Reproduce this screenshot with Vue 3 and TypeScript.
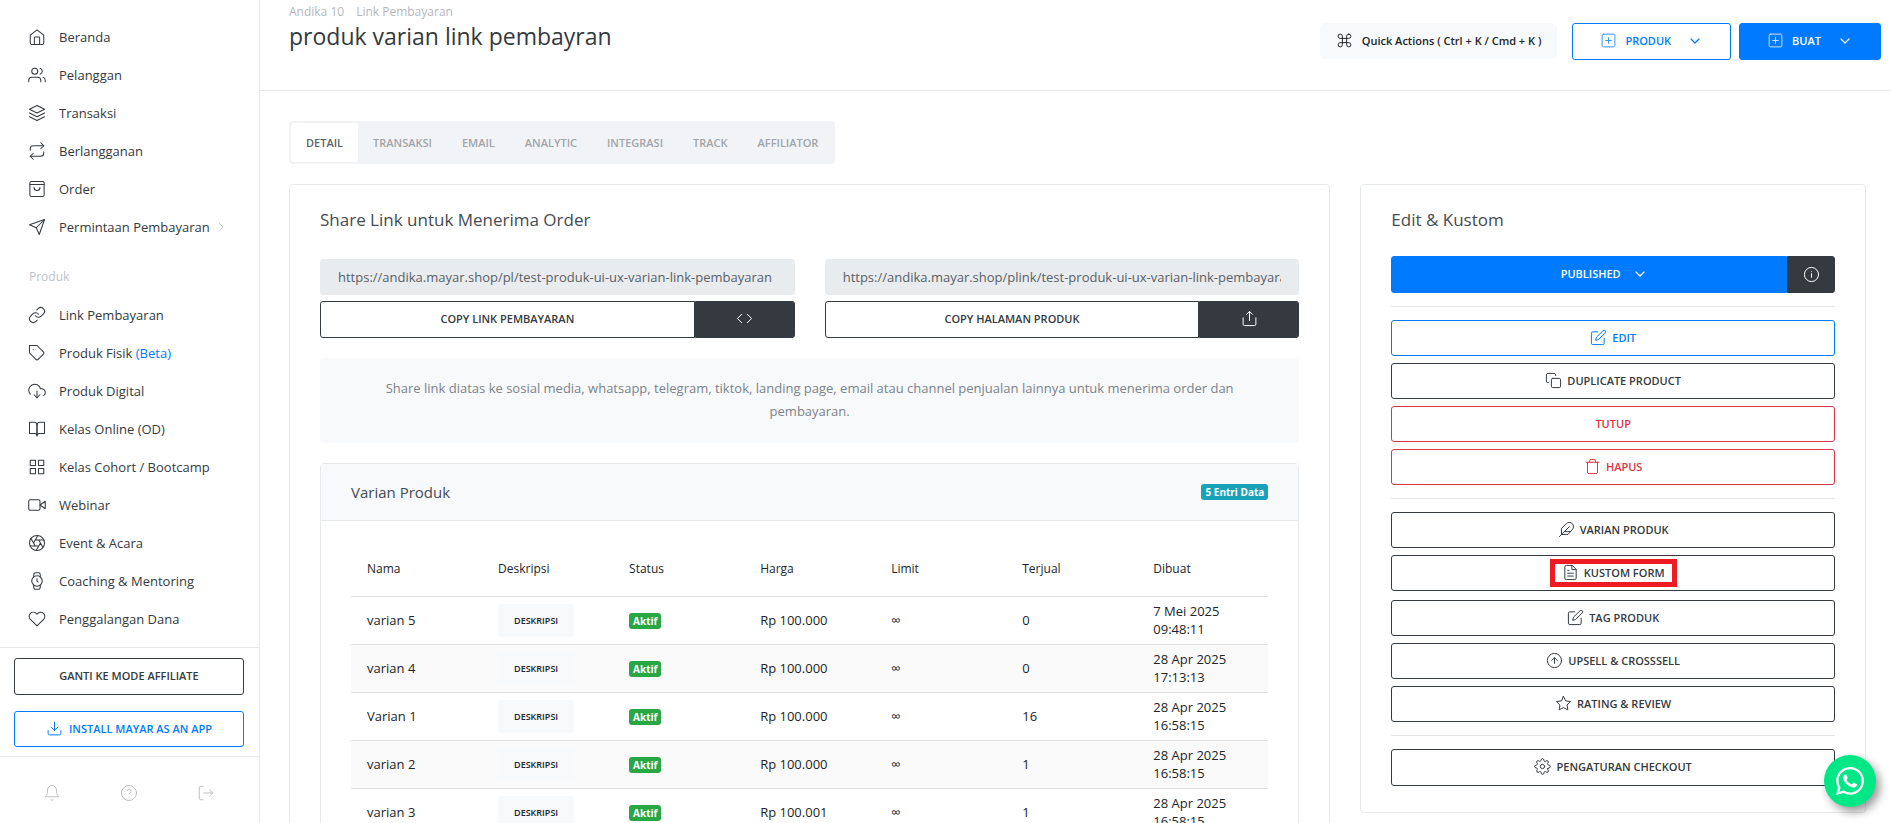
<script setup lang="ts">
import { h } from 'vue'

interface NavItem {
  label: string
  icon: string
  note?: string
  expandable?: boolean
}

interface Action {
  label: string
  icon?: string
  tone: 'blue' | 'dark' | 'red'
  marked?: boolean
}

interface Variant {
  name: string
  price: string
  sold: number
  created: string
}

const shapes: Record<string, string> = {
  home: '<path d="M3 9.5l9-7 9 7V20a2 2 0 0 1-2 2H5a2 2 0 0 1-2-2z"/><path d="M8.500 22v-9a1 1 0 0 1 1-1h5a1 1 0 0 1 1 1v9"/>',
  users: '<path d="M17 21v-2a4 4 0 0 0-4-4H5a4 4 0 0 0-4 4v2"/><circle cx="9" cy="7" r="4"/><path d="M23 21v-2a4 4 0 0 0-3-3.870"/><path d="M16 3.130a4 4 0 0 1 0 7.750"/>',
  layers: '<path d="M12 2L2 7l10 5 10-5z"/><path d="M2 17l10 5 10-5"/><path d="M2 12l10 5 10-5"/>',
  repeat: '<path d="M17 1l4 4-4 4"/><path d="M3 11V9a4 4 0 0 1 4-4h14"/><path d="M7 23l-4-4 4-4"/><path d="M21 13v2a4 4 0 0 1-4 4H3"/>',
  bag: '<rect x="2.500" y="2" width="19" height="20" rx="2"/><path d="M2.500 6h19"/><path d="M16 10a4 4 0 0 1-8 0"/>',
  send: '<path d="M22 2L11 13"/><path d="M22 2l-7 20-4-9-9-4z"/>',
  link: '<path d="M10 13a5 5 0 0 0 7.540.540l3-3a5 5 0 0 0-7.070-7.070l-1.720 1.710"/><path d="M14 11a5 5 0 0 0-7.540-.540l-3 3a5 5 0 0 0 7.070 7.070l1.710-1.710"/>',
  tag: '<path d="M20.590 13.410l-7.170 7.170a2 2 0 0 1-2.830 0L2 12V2h10l8.590 8.590a2 2 0 0 1 0 2.820z"/><path d="M7 7h.010"/>',
  cloud: '<path d="M8 17l4 4 4-4"/><path d="M12 12v9"/><path d="M20.880 18.090A5 5 0 0 0 18 9h-1.260A8 8 0 1 0 3 16.290"/>',
  book: '<path d="M2 3h6a4 4 0 0 1 4 4v14a3 3 0 0 0-3-3H2z"/><path d="M22 3h-6a4 4 0 0 0-4 4v14a3 3 0 0 1 3-3h7z"/>',
  grid: '<path d="M3 3h7v7H3zM14 3h7v7h-7zM14 14h7v7h-7zM3 14h7v7H3z"/>',
  video: '<path d="M23 7l-7 5 7 5z"/><rect x="1" y="5" width="15" height="14" rx="2"/>',
  aperture: '<circle cx="12" cy="12" r="10"/><path d="M14.310 8l5.740 9.940M9.690 8h11.480M7.380 12l5.740-9.940M9.690 16L3.950 6.060M14.310 16H2.830M16.620 12l-5.740 9.940"/>',
  watch: '<circle cx="12" cy="12" r="7"/><path d="M12 9v3l1.500 1.500"/><path d="M16.510 17.350l-.350 3.830a2 2 0 0 1-2 1.820H9.830a2 2 0 0 1-2-1.820l-.350-3.830m.010-10.700l.350-3.830A2 2 0 0 1 9.830 1h4.350a2 2 0 0 1 2 1.820l.350 3.830"/>',
  heart: '<path d="M20.840 4.610a5.500 5.500 0 0 0-7.780 0L12 5.670l-1.060-1.060a5.500 5.500 0 0 0-7.780 7.780L12 21.230l8.840-8.840a5.500 5.500 0 0 0 0-7.780z"/>',
  right: '<path d="M8 20l8-8-8-8"/>',
  down: '<path d="M6 9l6 6 6-6"/>',
  download: '<path d="M21 15v4a2 2 0 0 1-2 2H5a2 2 0 0 1-2-2v-4"/><path d="M7 10l5 5 5-5"/><path d="M12 15V3"/>',
  bell: '<path d="M18 8A6 6 0 0 0 6 8c0 7-3 9-3 9h18s-3-2-3-9"/><path d="M13.730 21a2 2 0 0 1-3.460 0"/>',
  help: '<circle cx="12" cy="12" r="10"/><path d="M9.090 9a3 3 0 0 1 5.830 1c0 2-3 3-3 3"/><path d="M12 17h.010"/>',
  logout: '<path d="M8 21H5a2 2 0 0 1-2-2V5a2 2 0 0 1 2-2h3"/><path d="M17 16l4-4-4-4"/><path d="M21 12H9"/>',
  command: '<path d="M18 3a3 3 0 0 0-3 3v12a3 3 0 1 0 3-3H6a3 3 0 1 0 3 3V6a3 3 0 1 0-3 3h12a3 3 0 0 0 0-6z"/>',
  plus: '<rect x="3" y="3" width="18" height="18" rx="2"/><path d="M12 8v8M8 12h8"/>',
  code: '<path d="M16 18l6-6-6-6"/><path d="M8 6l-6 6 6 6"/>',
  share: '<path d="M3 11v9a2 2 0 0 0 2 2h14a2 2 0 0 0 2-2v-9"/><path d="M16 6l-4-4-4 4"/><path d="M12 2v13"/>',
  info: '<circle cx="12" cy="12" r="10"/><path d="M12 16v-5M12 8h.010"/>',
  edit: '<path d="M11 4H4a2 2 0 0 0-2 2v14a2 2 0 0 0 2 2h14a2 2 0 0 0 2-2v-7"/><path d="M18.500 2.500a2.120 2.120 0 0 1 3 3L12 15l-4 1 1-4z"/>',
  copy: '<rect x="9" y="9" width="13" height="13" rx="2"/><path d="M5 15H4a2 2 0 0 1-2-2V4a2 2 0 0 1 2-2h9a2 2 0 0 1 2 2v1"/>',
  trash: '<path d="M3 6h18"/><path d="M19 6v14a2 2 0 0 1-2 2H7a2 2 0 0 1-2-2V6m3 0V4a2 2 0 0 1 2-2h4a2 2 0 0 1 2 2v2"/>',
  feather: '<path d="M20.240 12.240a6 6 0 0 0-8.490-8.490L5 10.500V19h8.500z"/><path d="M16 8L2 22"/><path d="M17.500 15H9"/>',
  file: '<path d="M14 2H6a2 2 0 0 0-2 2v16a2 2 0 0 0 2 2h12a2 2 0 0 0 2-2V8z"/><path d="M14 2v6h6M16 13H8M16 17H8M10 9H8"/>',
  up: '<circle cx="12" cy="12" r="10"/><path d="M16 12l-4-4-4 4"/><path d="M12 16V8"/>',
  star: '<path d="M12 2l3.090 6.260L22 9.270l-5 4.870 1.180 6.880L12 17.770l-6.180 3.250L7 14.140 2 9.270l6.910-1.010z"/>',
  gear: '<circle cx="12" cy="12" r="3"/><path d="M19.400 15a1.650 1.650 0 0 0 .33 1.820l.06.06a2 2 0 1 1-2.830 2.830l-.06-.06a1.650 1.650 0 0 0-2.800 1.170V21a2 2 0 1 1-4 0v-.09A1.650 1.650 0 0 0 7.200 19.650l-.06.06a2 2 0 1 1-2.830-2.830l.06-.06A1.650 1.650 0 0 0 3.200 14H3a2 2 0 1 1 0-4h.09A1.650 1.650 0 0 0 4.370 7.200l-.06-.06a2 2 0 1 1 2.830-2.830l.06.06A1.650 1.650 0 0 0 10 3.200V3a2 2 0 1 1 4 0v.09a1.650 1.650 0 0 0 2.820 1.280l.06-.06a2 2 0 1 1 2.830 2.830l-.06.06A1.650 1.650 0 0 0 20.820 10H21a2 2 0 1 1 0 4h-.09a1.650 1.650 0 0 0-1.510 1z"/>',
}

const Icon = (props: { name: string }) =>
  h('svg', { class: 'icon', viewBox: '0 0 24 24', 'aria-hidden': 'true', innerHTML: shapes[props.name] })
Icon.props = ['name']

const mainNav: NavItem[] = [
  { label: 'Beranda', icon: 'home' },
  { label: 'Pelanggan', icon: 'users' },
  { label: 'Transaksi', icon: 'layers' },
  { label: 'Berlangganan', icon: 'repeat' },
  { label: 'Order', icon: 'bag' },
  { label: 'Permintaan Pembayaran', icon: 'send', expandable: true },
]

const productNav: NavItem[] = [
  { label: 'Link Pembayaran', icon: 'link' },
  { label: 'Produk Fisik', icon: 'tag', note: '(Beta)' },
  { label: 'Produk Digital', icon: 'cloud' },
  { label: 'Kelas Online (OD)', icon: 'book' },
  { label: 'Kelas Cohort / Bootcamp', icon: 'grid' },
  { label: 'Webinar', icon: 'video' },
  { label: 'Event & Acara', icon: 'aperture' },
  { label: 'Coaching & Mentoring', icon: 'watch' },
  { label: 'Penggalangan Dana', icon: 'heart' },
]

const tabs = ['Detail', 'Transaksi', 'Email', 'Analytic', 'Integrasi', 'Track', 'Affiliator']

const links = [
  { label: 'Copy Link Pembayaran', url: 'https://andika.mayar.shop/pl/test-produk-ui-ux-varian-link-pembayaran', icon: 'code', side: 'Embed' },
  { label: 'Copy Halaman Produk', url: 'https://andika.mayar.shop/plink/test-produk-ui-ux-varian-link-pembayaran', icon: 'share', side: 'Bagikan' },
]

const columns = ['Nama', 'Deskripsi', 'Status', 'Harga', 'Limit', 'Terjual', 'Dibuat']

const variants: Variant[] = [
  { name: 'varian 5', price: 'Rp 100.000', sold: 0, created: '7 Mei 2025 09:48:11' },
  { name: 'varian 4', price: 'Rp 100.000', sold: 0, created: '28 Apr 2025 17:13:13' },
  { name: 'Varian 1', price: 'Rp 100.000', sold: 16, created: '28 Apr 2025 16:58:15' },
  { name: 'varian 2', price: 'Rp 100.000', sold: 1, created: '28 Apr 2025 16:58:15' },
  { name: 'varian 3', price: 'Rp 100.001', sold: 1, created: '28 Apr 2025 16:58:15' },
]

const actionGroups: Action[][] = [
  [
    { label: 'Edit', icon: 'edit', tone: 'blue' },
    { label: 'Duplicate Product', icon: 'copy', tone: 'dark' },
    { label: 'Tutup', tone: 'red' },
    { label: 'Hapus', icon: 'trash', tone: 'red' },
  ],
  [
    { label: 'Varian Produk', icon: 'feather', tone: 'dark' },
    { label: 'Kustom Form', icon: 'file', tone: 'dark', marked: true },
    { label: 'Tag Produk', icon: 'edit', tone: 'dark' },
    { label: 'Upsell & Crosssell', icon: 'up', tone: 'dark' },
    { label: 'Rating & Review', icon: 'star', tone: 'dark' },
  ],
  [{ label: 'Pengaturan Checkout', icon: 'gear', tone: 'dark' }],
]
</script>

<template>
  <div class="app">
    <aside class="sidebar">
      <nav class="nav">
        <a v-for="item in mainNav" :key="item.label" href="#" class="nav-item">
          <Icon :name="item.icon" />
          <span>{{ item.label }}</span>
          <Icon v-if="item.expandable" name="right" class="nav-arrow" />
        </a>
        <h2 class="nav-label">Produk</h2>
        <a v-for="item in productNav" :key="item.label" href="#" class="nav-item">
          <Icon :name="item.icon" />
          <span>{{ item.label }} <span v-if="item.note" class="note">{{ item.note }}</span></span>
        </a>
      </nav>
      <div class="side-actions">
        <button type="button" class="btn dark">Ganti ke mode affiliate</button>
        <button type="button" class="btn blue"><Icon name="download" />Install Mayar as an app</button>
      </div>
      <div class="side-foot">
        <button type="button" aria-label="Notifikasi"><Icon name="bell" /></button>
        <button type="button" aria-label="Bantuan"><Icon name="help" /></button>
        <button type="button" aria-label="Keluar"><Icon name="logout" /></button>
      </div>
    </aside>

    <main class="main">
      <header class="header">
        <div>
          <div class="crumbs"><a href="#">Andika 10</a><a href="#">Link Pembayaran</a></div>
          <h1>produk varian link pembayran</h1>
        </div>
        <div class="header-actions">
          <button type="button" class="btn quick"><Icon name="command" />Quick Actions ( Ctrl + K / Cmd + K )</button>
          <button type="button" class="btn blue menu"><Icon name="plus" class="soft" />Produk<Icon name="down" class="caret" /></button>
          <button type="button" class="btn blue solid menu"><Icon name="plus" class="soft" />Buat<Icon name="down" class="caret" /></button>
        </div>
      </header>

      <div class="content">
        <div class="tabs" role="tablist">
          <button v-for="(tab, i) in tabs" :key="tab" type="button" role="tab" class="tab" :class="{ active: i === 0 }" :aria-selected="i === 0">
            {{ tab }}
          </button>
        </div>

        <div class="row">
          <div class="col">
            <section class="card">
              <h2 class="card-title">Share Link untuk Menerima Order</h2>
              <div class="links">
                <div v-for="link in links" :key="link.label" class="link-box">
                  <input type="text" class="url" readonly :value="link.url" :aria-label="link.label" />
                  <div class="split">
                    <button type="button" class="btn dark">{{ link.label }}</button>
                    <button type="button" class="btn dark solid side" :aria-label="link.side"><Icon :name="link.icon" /></button>
                  </div>
                </div>
              </div>
              <p class="hint">
                Share link diatas ke sosial media, whatsapp, telegram, tiktok, landing page, email atau channel penjualan lainnya
                untuk menerima order dan pembayaran.
              </p>

              <section class="variants">
                <header class="variants-head">
                  <h3>Varian Produk</h3>
                  <span class="badge info">5 Entri Data</span>
                </header>
                <table>
                  <thead>
                    <tr>
                      <th v-for="column in columns" :key="column" scope="col">{{ column }}</th>
                    </tr>
                  </thead>
                  <tbody>
                    <tr v-for="variant in variants" :key="variant.name">
                      <td>{{ variant.name }}</td>
                      <td><button type="button" class="mini">Deskripsi</button></td>
                      <td><span class="badge ok">Aktif</span></td>
                      <td>{{ variant.price }}</td>
                      <td>∞</td>
                      <td>{{ variant.sold }}</td>
                      <td>{{ variant.created }}</td>
                    </tr>
                  </tbody>
                </table>
              </section>
            </section>
          </div>

          <div class="col">
            <section class="card actions">
              <h2 class="card-title">Edit &amp; Kustom</h2>
              <div class="split">
                <button type="button" class="btn blue solid published">Published<Icon name="down" class="caret" /></button>
                <button type="button" class="btn dark solid info-btn" aria-label="Info"><Icon name="info" /></button>
              </div>
              <div v-for="(group, g) in actionGroups" :key="g" class="group">
                <button v-for="action in group" :key="action.label" type="button" class="btn" :class="[action.tone, { marked: action.marked }]">
                  <span class="btn-label"><Icon v-if="action.icon" :name="action.icon" />{{ action.label }}</span>
                </button>
              </div>
            </section>
          </div>
        </div>
      </div>
    </main>

    <a href="#" class="whatsapp" aria-label="WhatsApp">
      <svg viewBox="0 0 24 24" aria-hidden="true">
        <path
          d="M17.472 14.382c-.297-.149-1.758-.867-2.030-.967-.273-.099-.471-.148-.670.150-.197.297-.767.966-.940 1.164-.173.199-.347.223-.644.075-.297-.150-1.255-.463-2.390-1.475-.883-.788-1.480-1.761-1.653-2.059-.173-.297-.018-.458.130-.606.134-.133.298-.347.446-.520.149-.174.198-.298.298-.497.099-.198.050-.371-.025-.520-.075-.149-.669-1.612-.916-2.207-.242-.579-.487-.500-.669-.510-.173-.008-.371-.010-.570-.010-.198 0-.520.074-.792.372-.272.297-1.040 1.016-1.040 2.479 0 1.462 1.065 2.875 1.213 3.074.149.198 2.096 3.200 5.077 4.487.709.306 1.262.489 1.694.625.712.227 1.360.195 1.871.118.571-.085 1.758-.719 2.006-1.413.248-.694.248-1.289.173-1.413-.074-.124-.272-.198-.570-.347m-5.421 7.403h-.004a9.870 9.870 0 0 1-5.031-1.378l-.361-.214-3.741.982.998-3.648-.235-.374a9.860 9.860 0 0 1-1.510-5.260c.001-5.450 4.436-9.884 9.888-9.884 2.640 0 5.122 1.030 6.988 2.898a9.825 9.825 0 0 1 2.893 6.994c-.003 5.450-4.437 9.884-9.885 9.884m8.413-18.297A11.815 11.815 0 0 0 12.050 0C5.495 0 .160 5.335.157 11.892c0 2.096.547 4.142 1.588 5.945L.057 24l6.305-1.654a11.882 11.882 0 0 0 5.683 1.448h.005c6.554 0 11.890-5.335 11.893-11.893a11.821 11.821 0 0 0-3.480-8.413z"
        />
      </svg>
    </a>
  </div>
</template>

<style>
body {
  margin: 0;
}
</style>

<style scoped>
.app {
  --line: #e7eaed;
  --ink: #343a40;
  --blue: #007bff;
  display: flex;
  height: 100vh;
  overflow: hidden;
  background: #fff;
  color: #212529;
  font-family: 'Open Sans', 'Noto Sans', sans-serif;
  font-size: 13px;
  line-height: 18px;
}
.app *,
.app *::before,
.app *::after {
  box-sizing: border-box;
}
a {
  color: inherit;
  text-decoration: none;
}
button {
  font-family: inherit;
  cursor: pointer;
}
h1,
h2,
h3,
p {
  margin: 0;
  font-weight: 400;
}
.icon {
  flex: none;
  width: 18px;
  height: 18px;
  fill: none;
  stroke: currentColor;
  stroke-width: 1.4;
  stroke-linecap: round;
  stroke-linejoin: round;
}

/* Sidebar */
.sidebar {
  flex: none;
  display: flex;
  flex-direction: column;
  width: 260px;
  border-right: 1px solid var(--line);
}
.nav {
  flex: 1;
  min-height: 0;
  overflow: hidden;
  padding-top: 18px;
  color: var(--ink);
}
.nav-item {
  display: flex;
  align-items: center;
  height: 38px;
  padding: 0 28px;
  white-space: nowrap;
}
.nav-item .icon + span {
  margin-left: 13px;
}
.nav-item .note {
  color: var(--blue);
}
.nav-item .nav-arrow {
  width: 12px;
  height: 12px;
  margin-left: 5px;
  color: #b4b8bc;
}
.nav-label {
  height: 50px;
  padding: 0 29px;
  color: #bdc2c8;
  font-size: 12px;
  font-weight: 500;
  line-height: 62px;
}
.side-actions {
  display: grid;
  gap: 16px;
  padding: 10px 15px 9px 14px;
  border-top: 1px solid var(--line);
}
.side-actions .dark {
  height: 37px;
}
.side-foot {
  display: flex;
  justify-content: space-around;
  padding: 27px 15px 19px 13px;
  border-top: 1px solid var(--line);
}
.side-foot button {
  width: 18px;
  height: 20px;
  padding: 0;
  border: 0;
  background: none;
  color: #b4b8bc;
}
.side-foot .icon {
  stroke-width: 1.2;
}

/* Buttons */
.btn {
  display: flex;
  align-items: center;
  justify-content: center;
  gap: 6px;
  height: 36px;
  padding: 0 16px 2px;
  border: 1px solid currentColor;
  border-radius: 3px;
  background: #fff;
  font-size: 11px;
  font-weight: 600;
  text-transform: uppercase;
  white-space: nowrap;
}
.btn .icon {
  width: 17px;
  height: 17px;
}
.blue {
  color: var(--blue);
}
.dark {
  color: var(--ink);
}
.red {
  color: #dc3545;
}
.solid {
  color: #fff;
}
.solid.blue {
  border-color: var(--blue);
  background: var(--blue);
}
.solid.dark {
  border-color: var(--ink);
  background: var(--ink);
}
.btn .caret {
  width: 16px;
  height: 16px;
  margin-left: 5px;
  stroke-width: 1.8;
}
.btn .soft {
  opacity: 0.8;
}
.split {
  display: flex;
}
.split .btn {
  height: 37px;
}
.split .btn:first-child {
  flex: 1;
  border-radius: 3px 0 0 3px;
}
.split .btn:last-child {
  border-radius: 0 3px 3px 0;
}
.side {
  width: 100px;
}
.info-btn {
  width: 48px;
  padding: 0;
}
.btn.published {
  padding-left: 46px;
}

/* Header */
.main {
  flex: 1;
  min-width: 0;
  overflow: hidden;
}
.header {
  display: flex;
  justify-content: space-between;
  height: 91px;
  padding: 3px 10px 0 29px;
  border-bottom: 1px solid var(--line);
}
.crumbs {
  display: flex;
  gap: 12px;
  color: #b4b8bc;
  font-size: 12px;
}
h1 {
  color: var(--ink);
  font-size: 23px;
  line-height: 30px;
}
.header-actions {
  display: flex;
  align-items: flex-start;
  gap: 8px;
  padding-top: 20px;
}
.header-actions .btn {
  height: 37px;
}
.header-actions .quick {
  gap: 9px;
  height: 36px;
  margin-right: 7px;
  padding: 0 15px 1px;
  border-color: #f8f9fa;
  border-radius: 5px;
  background: #f8f9fa;
  color: #212529;
  text-transform: none;
}
.btn.menu {
  gap: 8px;
  padding: 0 27px 2px;
}
.btn.menu .caret {
  margin-left: 8px;
}

/* Content */
.content {
  padding: 30px 25px 0 29px;
}
.tabs {
  display: inline-flex;
  padding: 2px;
  border-radius: 4px;
  background: #f2f3f7;
  vertical-align: top;
}
.tab {
  height: 39px;
  padding: 0 15px 1px;
  border: 0;
  border-radius: 3px;
  background: none;
  color: #a0a5aa;
  font-size: 11px;
  font-weight: 600;
  text-transform: uppercase;
}
.tab.active {
  background: #fff;
  color: #5c636a;
}
.row {
  display: grid;
  grid-template-columns: 2fr 1fr;
  align-items: start;
  margin: 20px -15px 0;
}
.col {
  min-width: 0;
  padding: 0 15px;
}
.card {
  padding: 21px 30px 26px;
  border: 1px solid var(--line);
  border-radius: 4px;
}
.card-title {
  color: #454b52;
  font-size: 17px;
  line-height: 27px;
}
.links {
  display: grid;
  grid-template-columns: 1fr 1fr;
  gap: 30px;
  padding-top: 26px;
}
.link-box {
  display: grid;
  gap: 6px;
  min-width: 0;
}
.url {
  width: 100%;
  height: 36px;
  padding: 0 18px;
  border: 0;
  border-radius: 3px;
  background: #e9ecef;
  color: #596066;
  font-family: inherit;
  font-size: 13px;
}
.hint {
  margin: 20px 0;
  padding: 19px 60px 20px;
  border-radius: 4px;
  background: #f8f9fb;
  color: #7b838a;
  line-height: 23px;
  text-align: center;
}
.variants {
  border: 1px solid var(--line);
  border-radius: 4px;
}
.variants-head {
  display: flex;
  align-items: center;
  justify-content: space-between;
  height: 57px;
  padding: 0 30px;
  border-bottom: 1px solid var(--line);
  background: #f8f9fb;
}
h3 {
  color: #454b52;
  font-size: 15px;
}
.badge {
  display: inline-block;
  padding: 0 4px;
  border-radius: 3px;
  color: #fff;
  font-size: 10px;
  font-weight: 700;
  line-height: 16px;
}
.info {
  background: #17a2b8;
}
.ok {
  background: #28a745;
}
table {
  width: calc(100% - 60px);
  margin: 22px 30px;
  border-collapse: collapse;
  table-layout: fixed;
}
th {
  height: 53px;
  padding: 0 16px;
  font-size: 12px;
  font-weight: 400;
  text-align: left;
}
td {
  height: 48px;
  padding: 5px 16px;
  border-top: 1px solid #dee0e2;
}
tbody tr:nth-child(even) {
  background: #fafafa;
}
.mini {
  height: 33px;
  padding: 0 16px;
  border: 0;
  border-radius: 3px;
  background: #f8f9fb;
  color: #212529;
  font-size: 9px;
  font-weight: 600;
  text-transform: uppercase;
}

/* Action card */
.actions .card-title {
  padding-bottom: 23px;
}
.group {
  display: grid;
  gap: 7px;
  margin-top: 13px;
  padding-top: 13px;
  border-top: 1px solid #e5e5e5;
}
.group:last-child .btn {
  height: 37px;
}
.btn-label {
  position: relative;
  display: flex;
  align-items: center;
  gap: 5px;
}
.marked {
  margin-bottom: 2px;
}
.marked .btn-label::after {
  content: '';
  position: absolute;
  inset: -5px -12px -6px;
  border: 5px solid #ed1c24;
}

.whatsapp {
  position: fixed;
  right: 15px;
  bottom: 16px;
  display: grid;
  place-items: center;
  width: 52px;
  height: 52px;
  border-radius: 50%;
  background: #00e785;
  box-shadow: 4px 5px 10px rgba(0, 0, 0, 0.4);
}
.whatsapp svg {
  width: 28px;
  height: 28px;
  fill: #fff;
}
</style>
